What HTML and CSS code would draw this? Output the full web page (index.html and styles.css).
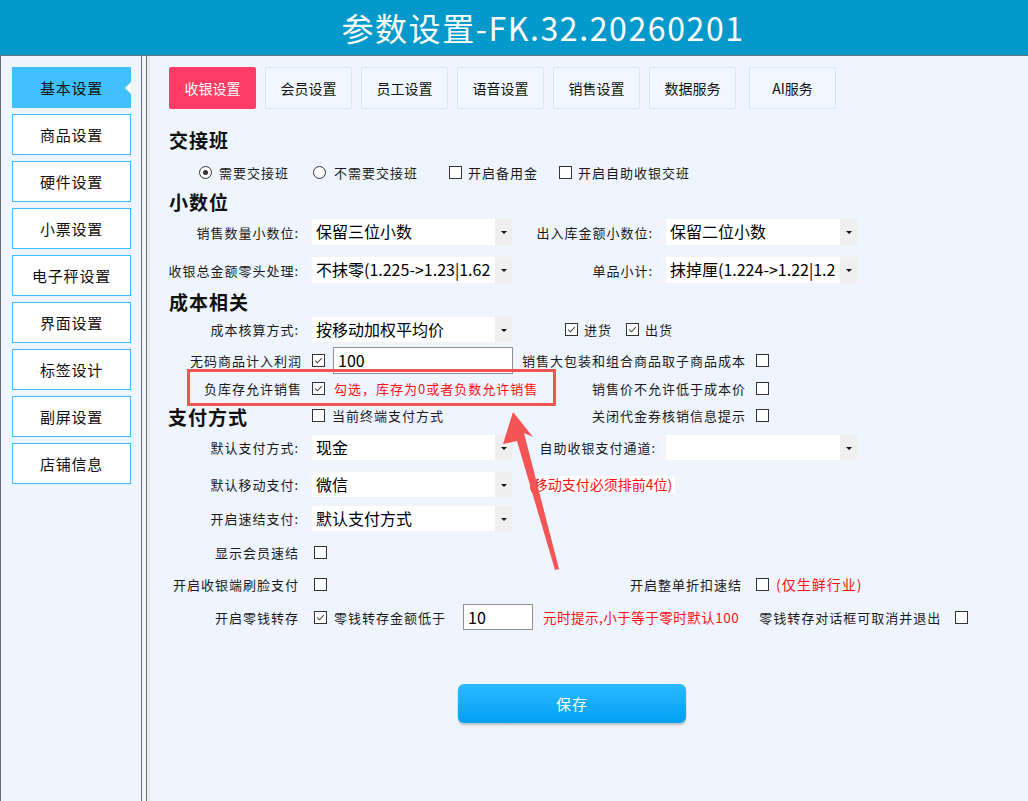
FILE: index.html
```html
<!DOCTYPE html>
<html lang="zh-CN">
<head>
<meta charset="utf-8">
<title>参数设置</title>
<link rel="stylesheet" href="styles.css">
</head>
<body>
<header class="titlebar">参数设置-FK.32.20260201</header>
<div class="page">
  <nav class="sidebar">
    <div class="side-btn active">基本设置</div>
    <div class="side-btn">商品设置</div>
    <div class="side-btn">硬件设置</div>
    <div class="side-btn">小票设置</div>
    <div class="side-btn">电子秤设置</div>
    <div class="side-btn">界面设置</div>
    <div class="side-btn">标签设计</div>
    <div class="side-btn">副屏设置</div>
    <div class="side-btn">店铺信息</div>
  </nav>
  <div class="divider"></div>
  <main class="content">
    <div class="tabs">
      <div class="tab active">收银设置</div>
      <div class="tab">会员设置</div>
      <div class="tab">员工设置</div>
      <div class="tab">语音设置</div>
      <div class="tab">销售设置</div>
      <div class="tab">数据服务</div>
      <div class="tab tab-ai">AI服务</div>
    </div>

    <h2 class="sec sec-shift">交接班</h2>
    <div class="radio-row">
      <span class="radio checked"></span><span class="opt opt-r1">需要交接班</span>
      <span class="radio gap-r2"></span><span class="opt opt-r2">不需要交接班</span>
      <span class="cb gap-c1"></span><span class="opt opt-c">开启备用金</span>
      <span class="cb gap-c2"></span><span class="opt opt-c">开启自助收银交班</span>
    </div>

    <h2 class="sec sec-dec">小数位</h2>
    <div class="frow h36">
      <span class="lbl">销售数量小数位:</span>
      <div class="select h28"><span class="sel-text">保留三位小数</span><span class="sel-arrow"></span></div>
      <span class="lbl">出入库金额小数位:</span>
      <div class="select h28"><span class="sel-text">保留二位小数</span><span class="sel-arrow"></span></div>
    </div>
    <div class="frow h40">
      <span class="lbl">收银总金额零头处理:</span>
      <div class="select h28"><span class="sel-text">不抹零(1.225-&gt;1.23|1.62</span><span class="sel-arrow"></span></div>
      <span class="lbl">单品小计:</span>
      <div class="select h28"><span class="sel-text">抹掉厘(1.224-&gt;1.22|1.2</span><span class="sel-arrow"></span></div>
    </div>

    <h2 class="sec sec-cost">成本相关</h2>
    <div class="frow h31">
      <span class="lbl">成本核算方式:</span>
      <div class="select h27"><span class="sel-text">按移动加权平均价</span><span class="sel-arrow"></span></div>
      <div class="span34 stock-checks">
        <span class="cb checked"><svg viewBox="0 0 13 13"><path d="M2.6 6.6 L5.2 9.2 L10.4 3.6"/></svg></span><span class="opt">进货</span>
        <span class="cb checked gap-out"><svg viewBox="0 0 13 13"><path d="M2.6 6.6 L5.2 9.2 L10.4 3.6"/></svg></span><span class="opt">出货</span>
      </div>
    </div>
    <div class="frow h31">
      <span class="lbl lbl-wide">无码商品计入利润</span>
      <div class="inline-ctl">
        <span class="cb checked cb-in"><svg viewBox="0 0 13 13"><path d="M2.6 6.6 L5.2 9.2 L10.4 3.6"/></svg></span>
        <span class="textbox tb-profit">100</span>
      </div>
      <div class="span34"><div class="right-check"><span class="opt">销售大包装和组合商品取子商品成本</span><span class="cb"></span></div></div>
    </div>
    <div class="frow h24">
      <span class="lbl lbl-wide">负库存允许销售</span>
      <div class="inline-ctl">
        <span class="cb checked cb-in"><svg viewBox="0 0 13 13"><path d="M2.6 6.6 L5.2 9.2 L10.4 3.6"/></svg></span>
        <span class="red-note note-neg">勾选，库存为0或者负数允许销售</span>
      </div>
      <div class="span34"><div class="right-check"><span class="opt">销售价不允许低于成本价</span><span class="cb"></span></div></div>
    </div>
    <div class="frow h26">
      <h2 class="sec sec-pay">支付方式</h2>
      <div class="inline-ctl">
        <span class="cb cb-in"></span><span class="opt opt-term">当前终端支付方式</span>
      </div>
      <div class="span34"><div class="right-check"><span class="opt">关闭代金券核销信息提示</span><span class="cb"></span></div></div>
    </div>
    <div class="frow h43">
      <span class="lbl">默认支付方式:</span>
      <div class="select h27"><span class="sel-text">现金</span><span class="sel-arrow"></span></div>
      <span class="lbl lbl-self">自助收银支付通道:</span>
      <div class="select h27"><span class="sel-text"></span><span class="sel-arrow"></span></div>
    </div>
    <div class="frow h31">
      <span class="lbl">默认移动支付:</span>
      <div class="select h27"><span class="sel-text">微信</span><span class="sel-arrow"></span></div>
      <div class="span34"><span class="mobile-note">(移动支付必须排前4位)</span></div>
    </div>
    <div class="frow h37">
      <span class="lbl">开启速结支付:</span>
      <div class="select h27"><span class="sel-text">默认支付方式</span><span class="sel-arrow"></span></div>
    </div>
    <div class="frow h30">
      <span class="lbl">显示会员速结</span>
      <div class="inline-ctl"><span class="cb cb-in3"></span></div>
    </div>
    <div class="frow h34">
      <span class="lbl">开启收银端刷脸支付</span>
      <div class="inline-ctl"><span class="cb cb-in3"></span></div>
      <div class="span34 face-right">
        <div class="right-check"><span class="opt">开启整单折扣速结</span><span class="cb"></span></div>
        <span class="red-note note-fresh">(仅生鲜行业)</span>
      </div>
    </div>
    <div class="frow h32">
      <span class="lbl">开启零钱转存</span>
      <div class="change-row">
        <span class="cb checked cb-in3"><svg viewBox="0 0 13 13"><path d="M2.6 6.6 L5.2 9.2 L10.4 3.6"/></svg></span>
        <span class="opt ch-lbl">零钱转存金额低于</span>
        <span class="textbox tb-change">10</span>
        <span class="red-note ch-note">元时提示,小于等于零时默认100</span>
        <span class="opt ch-lbl2">零钱转存对话框可取消并退出</span>
        <span class="cb ch-cb"></span>
      </div>
    </div>

    <div class="save-wrap"><button class="save-btn">保存</button></div>

    <div class="annot-box"></div>
    <svg class="annot-arrow" viewBox="0 0 70 170" width="70" height="170">
      <polygon points="18,7 38,32 29,28 64,164 60,165 22,36 8,39" fill="#f45454"/>
    </svg>
  </main>
</div>
</body>
</html>
```

FILE: styles.css
```css
* { box-sizing: border-box; }

html, body {
  margin: 0;
  padding: 0;
  width: 1028px;
  height: 801px;
  overflow: hidden;
  background: #eef5fe;
  font-family: "Noto Sans CJK SC", "Microsoft YaHei", sans-serif;
  color: #1a1a1a;
}

.titlebar {
  height: 56px;
  background: #0399ca;
  border-bottom: 1px solid #6d7378;
  color: #ffffff;
  font-size: 32px;
  line-height: 55px;
  text-align: center;
  letter-spacing: 1.6px;
  padding-left: 58px;
}

.page {
  display: flex;
  height: 745px;
}

/* Sidebar */
.sidebar {
  width: 142px;
  flex: none;
  border-left: 1px solid #6d6d72;
  border-right: 1px solid #6d6d72;
  padding-top: 11px;
  padding-left: 11px;
  display: flex;
  flex-direction: column;
  gap: 6px;
}

.side-btn {
  width: 119px;
  height: 41px;
  border: 1px solid #3dbdff;
  background: #ffffff;
  font-size: 15px;
  letter-spacing: 0.8px;
  line-height: 39px;
  text-align: center;
  color: #111;
  position: relative;
}

.side-btn.active {
  background: #40c0ff;
  border-color: #40c0ff;
}

.side-btn.active::after {
  content: "";
  position: absolute;
  right: -1px;
  top: 14px;
  border-right: 6px solid #ffffff;
  border-top: 6px solid transparent;
  border-bottom: 6px solid transparent;
}

.divider {
  width: 4px;
  flex: none;
}

/* Content */
.content {
  flex: 1;
  position: relative;
  border-left: 1px solid #6d6d72;
  box-shadow: inset 4px 0 0 #ebecee;
  padding: 11px 0 0 22px;
}

.tabs {
  display: flex;
  gap: 9px;
  height: 42px;
}

.tab {
  width: 87px;
  height: 42px;
  border: 1px solid #d6e3f4;
  border-radius: 2px;
  background: #f1f7ff;
  font-size: 14px;
  line-height: 40px;
  text-align: center;
  color: #111;
}

.tab.active {
  background: #ff3d64;
  border-color: #ff3d64;
  color: #ffffff;
}

.tab-ai { margin-left: 4px; }

.sec {
  margin: 0;
  font-size: 19px;
  font-weight: 700;
  color: #111;
  letter-spacing: 1px;
}

.sec-shift { margin-top: 17px; height: 28px; line-height: 28px; }
.sec-dec { height: 24px; line-height: 24px; }
.sec-cost { height: 24px; line-height: 24px; }
.sec-pay { line-height: 26px; margin-top: 4px; }

.radio-row {
  height: 36px;
  display: flex;
  align-items: center;
  padding-left: 30px;
  font-size: 13px;
}

.opt {
  font-size: 13px;
  letter-spacing: 1px;
  white-space: nowrap;
  color: #1a1a1a;
  flex: none;
}

.opt-r1 { margin-left: 7px; }
.gap-r2 { margin-left: 24px; }
.opt-r2 { margin-left: 8px; }
.gap-c1 { margin-left: 31px; }
.gap-c2 { margin-left: 21px; }
.opt-c { margin-left: 6px; }

.radio {
  display: inline-block;
  width: 13px;
  height: 13px;
  flex: none;
  border: 1px solid #333;
  border-radius: 50%;
  background: #fff;
  position: relative;
}

.radio.checked::after {
  content: "";
  position: absolute;
  left: 3px;
  top: 3px;
  width: 5px;
  height: 5px;
  border-radius: 50%;
  background: #333;
}

.cb {
  display: inline-block;
  width: 13px;
  height: 13px;
  flex: none;
  border: 1px solid #333;
  background: #fff;
}

.cb svg {
  display: block;
  width: 11px;
  height: 11px;
}

.cb svg path {
  fill: none;
  stroke: #444;
  stroke-width: 1.2;
}

/* Form grid rows */
.frow {
  display: grid;
  grid-template-columns: 131px 202px 128px 193px;
  column-gap: 12px;
  align-items: center;
  margin-left: -1px;
}

.h24 { height: 24px; }
.h26 { height: 26px; }
.h30 { height: 30px; }
.h31 { height: 31px; }
.h32 { height: 32px; }
.h34 { height: 34px; }
.h36 { height: 36px; }
.h37 { height: 37px; }
.h40 { height: 40px; }
.h43 { height: 43px; }

.lbl {
  text-align: right;
  font-size: 13px;
  letter-spacing: 1px;
  white-space: nowrap;
  color: #1a1a1a;
}

.lbl-wide { margin-right: -3px; }
.lbl-self { margin-right: -3px; }

.select {
  display: flex;
  background: #ffffff;
  border: 1px solid #f3f3f3;
}

.h28 { height: 28px; }
.h27 { height: 27px; }

.sel-text {
  flex: 1;
  overflow: hidden;
  white-space: nowrap;
  font-size: 16px;
  padding-left: 4px;
  line-height: 25px;
  color: #000;
}

.sel-arrow {
  width: 17px;
  flex: none;
  background: #efefef;
  position: relative;
}

.sel-arrow::after {
  content: "";
  position: absolute;
  left: 6px;
  top: 50%;
  margin-top: -1px;
  border-top: 3px solid #111;
  border-left: 3px solid transparent;
  border-right: 3px solid transparent;
}

.span34 {
  grid-column: 3 / 5;
  display: flex;
  align-items: center;
}

.stock-checks { padding-left: 40px; }
.stock-checks .opt { margin-left: 6px; }
.stock-checks .gap-out { margin-left: 14px; }

.inline-ctl {
  display: flex;
  align-items: center;
  white-space: nowrap;
}

.cb-in { margin-left: 1px; }
.cb-in3 { margin-left: 3px; }

.textbox {
  display: inline-block;
  flex: none;
  background: #fff;
  border: 1px solid #8f8f8f;
  font-size: 16px;
  color: #000;
  padding-left: 4px;
}

.tb-profit {
  margin-left: 8px;
  width: 180px;
  height: 27px;
  line-height: 25px;
}

.right-check {
  width: 244px;
  flex: none;
  display: flex;
  align-items: center;
  justify-content: flex-end;
  gap: 10px;
}

.red-note {
  color: #ff1010;
  font-size: 13px;
  letter-spacing: 1px;
  white-space: nowrap;
  flex: none;
}

.note-neg { margin-left: 9px; }

.opt-term { margin-left: 7px; }

.mobile-note {
  margin-left: 4px;
  background: #ffffff;
  color: #ff1010;
  font-size: 14px;
  line-height: 17px;
  padding-right: 3px;
  white-space: nowrap;
}

.face-right .right-check { width: 244px; gap: 14px; }
.note-fresh { margin-left: 7px; font-size: 14px; }

.change-row {
  grid-column: 2 / 5;
  display: flex;
  align-items: center;
  white-space: nowrap;
}

.ch-lbl { margin-left: 7px; }

.tb-change {
  margin-left: 17px;
  width: 70px;
  height: 26px;
  line-height: 24px;
}

.ch-note { margin-left: 10px; font-size: 13.5px; letter-spacing: 0.5px; }
.ch-lbl2 { margin-left: 20px; }
.ch-cb { margin-left: 14px; }

.save-wrap {
  margin-top: 51px;
  padding-left: 289px;
}

.save-btn {
  width: 228px;
  height: 39px;
  border: none;
  border-radius: 6px;
  background: linear-gradient(#2cb9ff, #00a1f2);
  box-shadow: 0 2px 2px rgba(0, 0, 0, 0.22);
  color: #ffffff;
  font-family: "Noto Sans CJK SC", "Microsoft YaHei", sans-serif;
  font-size: 15px;
  letter-spacing: 1px;
}

/* Annotation overlays */
.annot-box {
  position: absolute;
  left: 40px;
  top: 313px;
  width: 369px;
  height: 37px;
  border: 3px solid #f25454;
}

.annot-arrow {
  position: absolute;
  left: 348px;
  top: 349px;
}
```
